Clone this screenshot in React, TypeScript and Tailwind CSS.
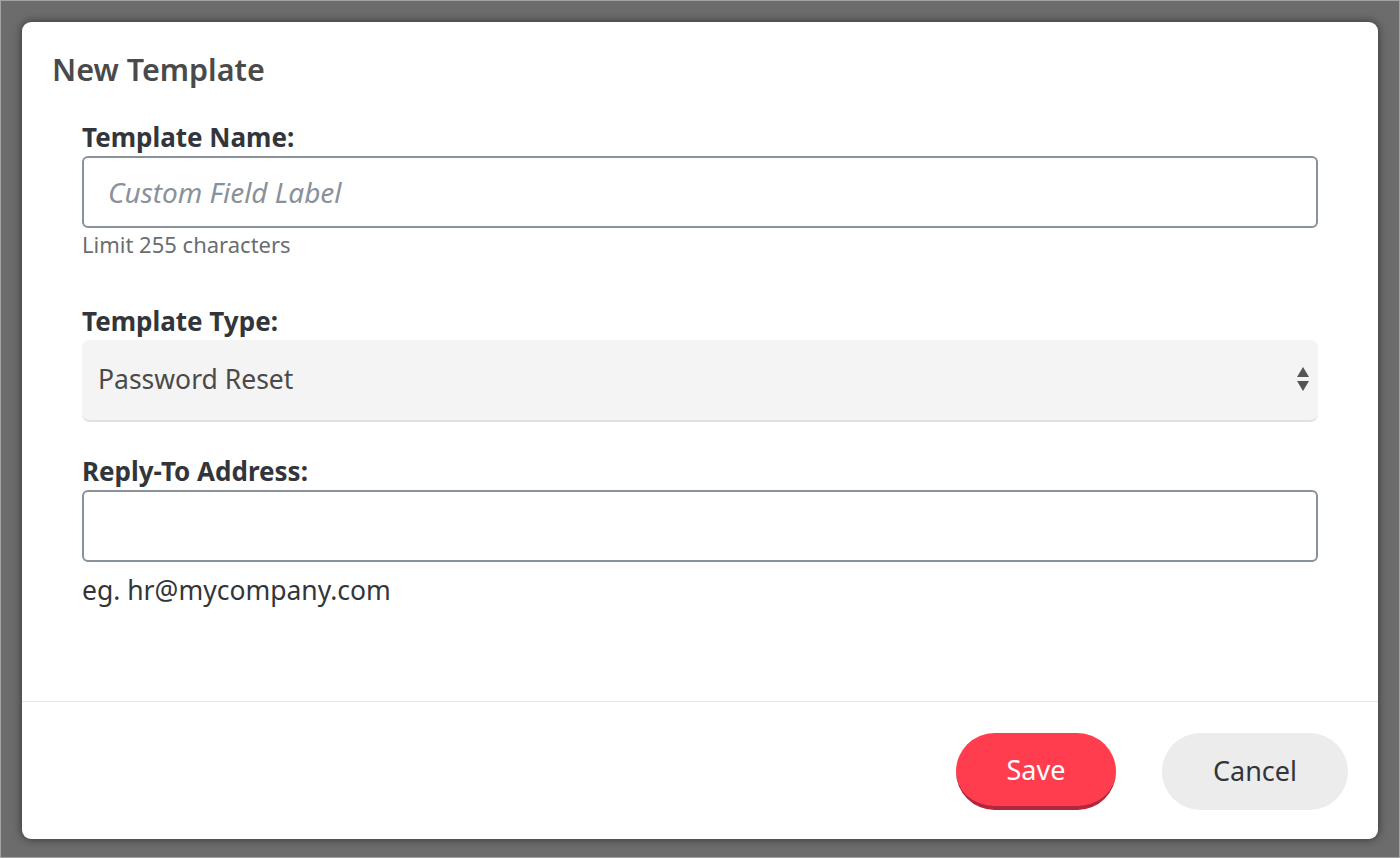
import { useState } from "react";

const font = { fontFamily: '"Noto Sans", "Open Sans", sans-serif' };

function SortArrows() {
  return (
    <svg width="14" height="28" viewBox="0 0 14 28" className="text-[#555]">
      <path d="M7 1 L13 11 L1 11 Z" fill="currentColor" />
      <path d="M1 15 L13 15 L7 25 Z" fill="currentColor" />
    </svg>
  );
}

function Label({ children }: { children: string }) {
  return (
    <label className="block text-[26px] leading-[32px] font-bold text-[#32363a]">
      {children}
    </label>
  );
}

export default function App() {
  const [name, setName] = useState("");
  const [type, setType] = useState("Password Reset");
  const [replyTo, setReplyTo] = useState("");

  return (
    <div
      className="w-full h-[858px] bg-[#6c6c6c] border border-[#a3a3a3] pt-[21px] pl-[21px] overflow-hidden"
      style={font}
    >
      {/* Modal */}
      <div className="w-[1356px] h-[817px] bg-white rounded-[9px] shadow-[0_0_10px_rgba(0,0,0,0.55)] flex flex-col">
        <h2 className="pl-[30px] pt-[29px] text-[30.5px] leading-[36px] font-semibold text-[#4a4a4a]">
          New Template
        </h2>

        <div className="flex-1 px-[60px] pt-[34px]">
          <Label>Template Name:</Label>
          <input
            value={name}
            onChange={(e) => setName(e.target.value)}
            placeholder="Custom Field Label"
            className="mt-[3px] w-full h-[72px] rounded-[6px] border-2 border-[#89919a] px-[24px] text-[28px] text-[#32363a] italic placeholder:text-[#89919a] outline-none"
          />
          <p className="mt-[4px] text-[22px] leading-[24px] text-[#6a6d70]">
            Limit 255 characters
          </p>

          <div className="mt-[49px]">
            <Label>Template Type:</Label>
          </div>
          <div className="mt-[3px] relative h-[82px] rounded-[8px] bg-[#f4f4f4] border-b-2 border-[#e0e0e0]">
            <select
              value={type}
              onChange={(e) => setType(e.target.value)}
              className="appearance-none w-full h-full bg-transparent pl-[16px] text-[26.5px] text-[#4a4a4a] outline-none"
            >
              <option>Password Reset</option>
              <option>Welcome</option>
              <option>Notification</option>
            </select>
            <span className="absolute right-[8px] top-[26px] pointer-events-none">
              <SortArrows />
            </span>
          </div>

          <div className="mt-[33px]">
            <Label>Reply-To Address:</Label>
          </div>
          <input
            value={replyTo}
            onChange={(e) => setReplyTo(e.target.value)}
            className="mt-[3px] w-full h-[72px] rounded-[6px] border-2 border-[#89919a] px-[24px] text-[26px] text-[#32363a] outline-none"
          />
          <p className="mt-[13px] text-[26.5px] leading-[30px] text-[#32363a]">
            eg. hr@mycompany.com
          </p>
        </div>

        {/* Footer */}
        <div className="border-t border-[#e5e5e5] h-[138px] flex justify-end items-start gap-[46px] pt-[31px] pr-[30px]">
          <button className="w-[160px] h-[77px] rounded-full bg-[#ff3d4f] border-b-4 border-[#b0283a] text-white text-[27px] leading-none">
            Save
          </button>
          <button className="w-[186px] h-[77px] rounded-full bg-[#ececec] text-[#32363a] text-[27px] leading-none pb-[3px]">
            Cancel
          </button>
        </div>
      </div>
    </div>
  );
}
